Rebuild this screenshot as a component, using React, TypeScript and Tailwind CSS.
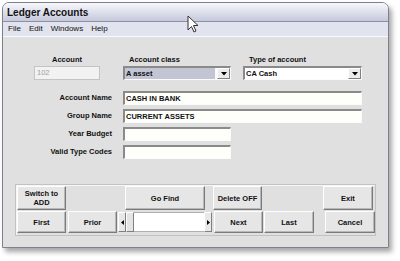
import React from "react";

const btn =
  "flex items-center justify-center text-center font-bold text-[7.5px] leading-[9px] text-[#111] bg-[#e6e6e6] border border-t-white border-l-white border-r-[#7a7a7a] border-b-[#7a7a7a] shadow-[inset_-1px_-1px_0_#b8b8b8]";

const inset =
  "border-t-2 border-l-2 border-t-[#8a8a8a] border-l-[#8a8a8a] border-b border-r border-b-[#fbfbfb] border-r-[#fbfbfb]";

function Arrow() {
  return (
    <div className="w-[13px] h-full flex items-center justify-center bg-[#ececec] border border-t-white border-l-white border-r-[#808080] border-b-[#808080]">
      <svg width="6" height="4" viewBox="0 0 6 4">
        <path d="M0 0 L6 0 L3 3.5 Z" fill="#000" />
      </svg>
    </div>
  );
}

function TextRow({ label, value, w }: { label: string; value?: string; w: string }) {
  return (
    <div className="flex h-[14px] items-center">
      <div className="w-[109px] text-right font-bold text-[7.5px] leading-[10px] text-[#111]">{label}</div>
      <div className={`ml-[11px] h-[14px] ${w} ${inset} bg-[#fefefb] flex items-center pl-[1px] font-bold text-[7.5px] text-[#111]`}>
        {value}
      </div>
    </div>
  );
}

export default function App() {
  return (
    <div className="relative w-[400px] h-[261px] bg-white overflow-hidden [font-family:'Liberation_Sans',Arial,sans-serif]">
      <div className="ml-[2px] mt-[2px] w-[387px] h-[246px] rounded-t-[7px] border border-[#7e8090] shadow-[3px_4px_5px_rgba(0,0,0,0.35)] flex flex-col overflow-hidden">
        {/* title bar */}
        <div className="h-[19px] shrink-0 bg-linear-to-b from-[#f7f7fb] to-[#c6c9dc] border-b border-[#8e91a6] flex items-center pl-[4px]">
          <span className="font-bold text-[10px] text-[#111]">Ledger Accounts</span>
        </div>
        {/* menu bar */}
        <div className="h-[15px] shrink-0 bg-[#e1e3ee] border-b border-[#fafafa] flex items-center pl-[5px] gap-[8px] text-[8px] text-[#111]">
          <span>File</span>
          <span>Edit</span>
          <span>Windows</span>
          <span>Help</span>
        </div>
        {/* content */}
        <div className="flex-1 bg-[#e0e0e0] pt-[18px]">
          {/* label row */}
          <div className="flex pl-[31px] font-bold text-[7.5px] leading-[10px] text-[#111]">
            <div className="w-[66px] text-center">Account</div>
            <div className="ml-[23px] w-[108px] pl-[6px]">Account class</div>
            <div className="ml-[12px] w-[119px] pl-[6px]">Type of account</div>
          </div>
          {/* inputs row */}
          <div className="flex pl-[31px] mt-[1px] h-[14px]">
            <div className="w-[66px] h-[14px] border border-[#c4c4c4] bg-[#f2f2f2] flex items-center pl-[2px] text-[7.5px] text-[#a0a0a0]">
              102
            </div>
            <div className={`ml-[23px] w-[108px] h-[14px] ${inset} bg-[#fafafa] flex`}>
              <div className="flex-1 bg-[#c3c5d5] flex items-center pl-[1px] font-bold text-[7.5px] text-[#111] mr-[2px]">
                A asset
              </div>
              <Arrow />
            </div>
            <div className={`ml-[12px] w-[119px] h-[14px] ${inset} bg-white flex`}>
              <div className="flex-1 flex items-center pl-[1px] font-bold text-[7.5px] text-[#111]">CA Cash</div>
              <Arrow />
            </div>
          </div>
          {/* text rows */}
          <div className="mt-[11px] flex flex-col gap-[4px]">
            <TextRow label="Account Name" value="CASH IN BANK" w="w-[239px]" />
            <TextRow label="Group Name" value="CURRENT ASSETS" w="w-[239px]" />
            <TextRow label="Year Budget" w="w-[108px]" />
            <TextRow label="Valid Type Codes" w="w-[108px]" />
          </div>
          {/* button panel */}
          <div className="mt-[25px] ml-[12px] w-[361px] h-[52px] border border-[#c2c2c2] shadow-[inset_1px_1px_0_#f6f6f6] pt-[1px] pl-[1px] flex flex-col gap-[1px]">
            <div className="flex h-[24px]">
              <div className={`${btn} w-[49px]`}>
                Switch to
                <br />
                ADD
              </div>
              <div className={`${btn} ml-[59px] w-[80px]`}>Go Find</div>
              <div className={`${btn} ml-[8px] w-[49px]`}>Delete OFF</div>
              <div className={`${btn} ml-[61px] w-[50px]`}>Exit</div>
            </div>
            <div className="flex h-[22px]">
              <div className={`${btn} w-[49px]`}>First</div>
              <div className={`${btn} ml-[2px] w-[49px]`}>Prior</div>
              <div className="ml-[1px] w-[94px] h-[20px] my-[1px] flex">
                <div className="w-[8px] h-full bg-[#e8e8e8] border border-t-white border-l-white border-r-[#808080] border-b-[#808080] flex items-center justify-center">
                  <svg width="3" height="5" viewBox="0 0 3 5">
                    <path d="M3 0 L3 5 L0 2.5 Z" fill="#000" />
                  </svg>
                </div>
                <div className="w-[8px] h-full bg-[#e4e4e4] border border-t-white border-l-white border-r-[#808080] border-b-[#808080]" />
                <div className="flex-1 h-full bg-white border-t border-b border-[#b0b0b0]" />
                <div className="w-[8px] h-full bg-[#e8e8e8] border border-t-white border-l-white border-r-[#808080] border-b-[#808080] flex items-center justify-center">
                  <svg width="3" height="5" viewBox="0 0 3 5">
                    <path d="M0 0 L0 5 L3 2.5 Z" fill="#000" />
                  </svg>
                </div>
              </div>
              <div className={`${btn} ml-[2px] w-[49px]`}>Next</div>
              <div className={`${btn} ml-[1px] w-[50px]`}>Last</div>
              <div className={`${btn} ml-[11px] w-[50px]`}>Cancel</div>
            </div>
          </div>
        </div>
      </div>
      {/* mouse cursor */}
      <svg className="absolute left-[187px] top-[15px]" width="13" height="19" viewBox="0 0 13 19">
        <path d="M1 1 L1 15 L4.5 11.5 L7 17 L9 16 L6.5 10.5 L11 10.5 Z" fill="#fff" stroke="#333" strokeWidth="1" strokeLinejoin="round" />
      </svg>
    </div>
  );
}
